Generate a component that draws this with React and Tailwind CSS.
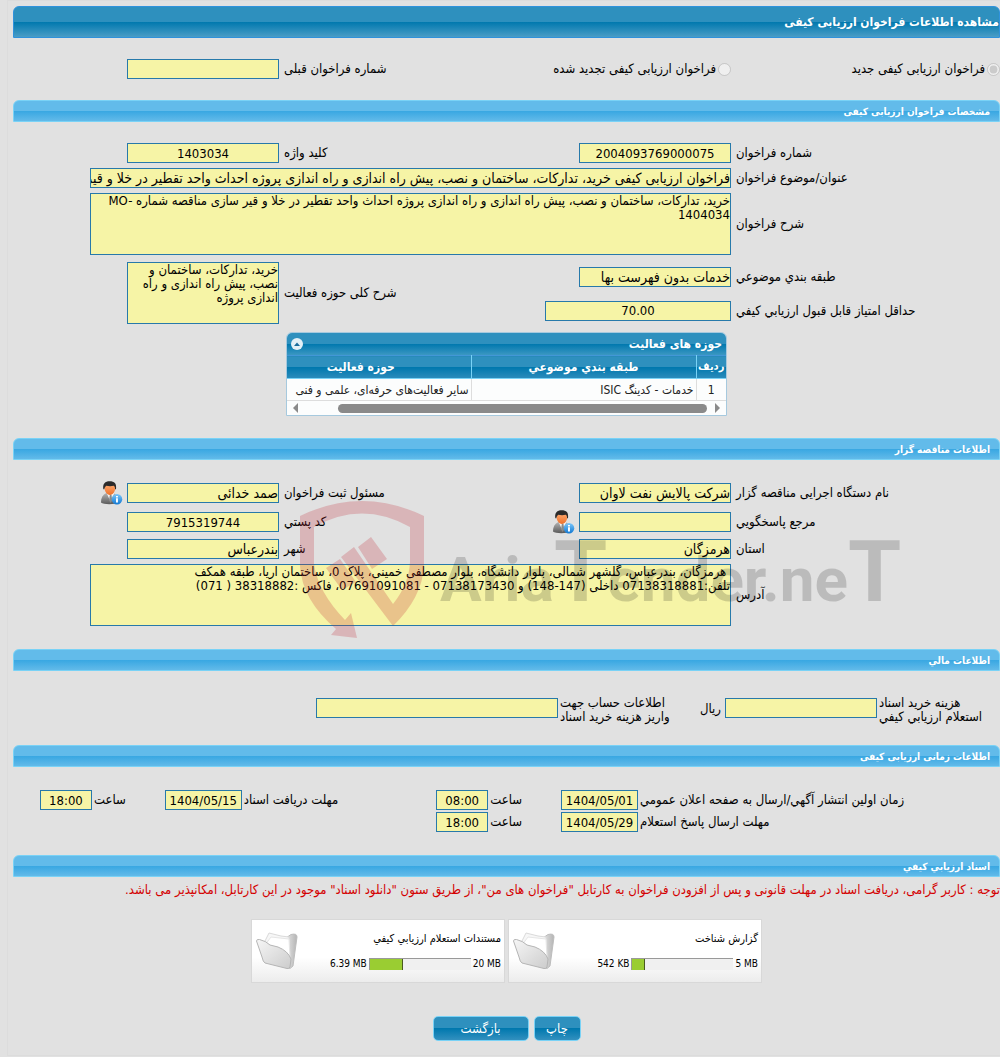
import React, { useId } from 'react';
import clsx from 'clsx';

const COST_ROW_LABEL = 'whitespace-pre-line text-left text-[13px] leading-[14px]';

const VALUES = {
  title:
    'فراخوان ارزیابی کیفی خرید، تدارکات، ساختمان و نصب، پیش راه اندازی و راه اندازی پروژه احداث واحد تقطیر در خلا و قیر سازی مناقصه شماره MO-1404034',
  description:
    'خرید، تدارکات، ساختمان و نصب، پیش راه اندازی و راه اندازی پروژه احداث واحد تقطیر در خلا و قیر سازی مناقصه شماره MO-1404034',
  activity: 'خرید، تدارکات، ساختمان و نصب، پیش راه اندازی و راه اندازی پروژه',
  address:
    ' هرمزگان، بندرعباس، گلشهر شمالی، بلوار دانشگاه، بلوار مصطفی خمینی، پلاک 0، ساختمان آریا، طبقه همکف\nتلفن:07138318881 داخلی (147-148) و 07138173430 - 07691091081، فاکس :38318882 ( 071)',
};

const documents = [
  { title: 'گزارش شناخت', used: '542 KB', total: '5 MB', percent: 12 },
  { title: 'مستندات استعلام ارزيابي كيفي', used: '6.39 MB', total: '20 MB', percent: 33 },
];

const SectionBar = ({ children }) => (
  <h2 className="flex h-[22px] items-center rounded-t-md border border-[#79d2f6] bg-[linear-gradient(to_bottom,#62bbea_0%,#62bbea_50%,#38a7e2_50%,#62bae9_100%)] px-[9px] text-[10px] font-bold text-white">
    {children}
  </h2>
);

const TextBox = ({ id, value = '', center, className }) => (
  <input
    id={id}
    type="text"
    readOnly
    value={value}
    className={clsx(
      'h-5 min-w-0 border border-[#2779aa] bg-[#f6f4a6] text-black outline-none',
      center ? 'text-center text-[13px]' : 'text-sm',
      className
    )}
  />
);

const TextArea = ({ id, value, className }) => (
  <textarea
    id={id}
    readOnly
    value={value}
    className={clsx(
      'block h-[62px] resize-none overflow-hidden border border-[#2779aa] bg-[#f6f4a6] text-[13px] leading-[14px] text-black outline-none',
      className
    )}
  />
);

// label cell followed by its value cell, both are items of the parent grid
const Field = ({ label, value, center, area, width = 'w-[152px]', cell, icon }) => {
  const id = useId();
  return (
    <>
      <label
        htmlFor={id}
        className={clsx('self-center whitespace-nowrap pl-px text-left text-[13px]', cell === 'tall' && 'row-span-2')}
      >
        {label}
      </label>
      <div
        className={clsx(
          'flex min-w-0 items-center gap-1 ps-1',
          cell === 'wide' && 'col-span-3',
          cell === 'tall' && 'row-span-2'
        )}
      >
        {area ? (
          <TextArea id={id} value={value} className={clsx('shrink-0', width)} />
        ) : (
          <TextBox id={id} value={value} center={center} className={clsx('shrink-0', width)} />
        )}
        {icon && (
          <button type="button" aria-label={label} className="shrink-0">
            <PersonIcon />
          </button>
        )}
      </div>
    </>
  );
};

const PersonIcon = () => (
  <svg width="23" height="24" viewBox="0 0 23 25" aria-hidden="true">
    <defs>
      <linearGradient id="suit" x1="0" y1="0" x2="0" y2="1">
        <stop offset="0" stopColor="#b4b4b4" />
        <stop offset="1" stopColor="#5a5a5a" />
      </linearGradient>
      <linearGradient id="face" x1="0" y1="0" x2="0" y2="1">
        <stop offset="0" stopColor="#ffb27a" />
        <stop offset="1" stopColor="#f0712a" />
      </linearGradient>
      <linearGradient id="info" x1="0" y1="0" x2="0" y2="1">
        <stop offset="0" stopColor="#7cc7fb" />
        <stop offset="1" stopColor="#1178d2" />
      </linearGradient>
    </defs>
    <path d="M.5 22.500c0-5 2-8.500 5.500-10h7c4 1 6 5 6 10-3 2-15.500 2.500-18.500 0z" fill="url(#suit)" />
    <path d="M6.500 12.500l4 9 4-9z" fill="#f4f4f4" />
    <path d="M9.800 14h1.600l.9 6-1.700 3-1.600-3z" fill="#8a8a8a" />
    <path d="M4 6c0-3 2-4.500 5.800-4.500S15.500 3 15.500 6.500c0 4.500-2.500 8-5.700 8S4 10.500 4 6z" fill="url(#face)" />
    <path d="M3 8.500C2 3 5 .3 9.500 .3c5 0 7.500 2.200 6.700 8.200h-1c0-2-.4-3-1.400-3.500C11 5.800 8 5.500 6 5 5 6 4.300 7 4 8.500z" fill="#2b2b2b" />
    <circle cx="17.200" cy="19" r="5.500" fill="url(#info)" />
    <path d="M16.200 15.500h2v1.700h-2zM16.200 18h2v4.500h-2z" fill="#fff" />
  </svg>
);

const FolderIcon = () => (
  <svg width="44" height="40" viewBox="0 0 44 40" aria-hidden="true" className="shrink-0">
    <defs>
      <linearGradient id="folder" x1="0" y1="0" x2="1" y2="1">
        <stop offset="0" stopColor="#f6f6f6" />
        <stop offset="1" stopColor="#cccccc" />
      </linearGradient>
      <linearGradient id="folderBack" x1="0" y1="0" x2="1" y2="0">
        <stop offset="0" stopColor="#f2f2f2" />
        <stop offset="1" stopColor="#b4b4b4" />
      </linearGradient>
    </defs>
    <path d="M28 9l8-5.500q6-1.500 6 2.500l-4 29-3 2.500-5-2z" fill="url(#folderBack)" stroke="#bdbdbd" />
    <path d="M9 12l5-10 12 3 8 1 1 20-22-5z" fill="#f7f7f7" stroke="#dadada" />
    <path d="M10 14l6-8 18 2 1 19z" fill="#fff" stroke="#e6e6e6" />
    <path d="M1.500 10q0-2 3-1.500Q11 10 15 14l8 2q10 4 13 12l-1 8q-1 2-3 1.500L10 32q-2-1-3-6z" fill="url(#folder)" stroke="#b5b5b5" />
  </svg>
);

const ActivityTable = () => (
  <div className="w-[441px] overflow-hidden rounded-t-md border border-[#a6c9de] bg-[#fcfdfd]">
    <div className="flex h-[22px] items-center justify-between bg-[linear-gradient(to_bottom,#2e90be_0%,#2e90be_50%,#0078ae_50%,#3b97c2_100%)] px-1 text-xs font-bold text-white">
      <h3>حوزه های فعالیت</h3>
      <button type="button" aria-label="حوزه های فعالیت" className="flex size-3 items-center justify-center rounded-full bg-[#e4f0f7]">
        <svg width="6" height="4" viewBox="0 0 6 4" aria-hidden="true">
          <path d="M0 4l3-3.500L6 4z" fill="#1c6d9c" />
        </svg>
      </button>
    </div>
    <table className="w-full table-fixed border-collapse">
      <colgroup>
        <col className="w-[30px]" />
        <col className="w-[225px]" />
        <col />
      </colgroup>
      <thead>
        <tr className="h-[23px] border-b border-t border-b-[#79d2f6] border-t-[#4297d7] bg-[linear-gradient(to_bottom,#2e90be_0%,#2e90be_50%,#0078ae_50%,#2a8bbb_100%)] text-xs leading-4 text-white">
          <th className="border-l border-[#79d2f6] p-0 text-[11px]">ردیف</th>
          <th className="border-l border-[#79d2f6] p-0">طبقه بندي موضوعي</th>
          <th className="py-0 pl-0 pr-9">حوزه فعالیت</th>
        </tr>
      </thead>
      <tbody>
        <tr className="h-[22px] border-b border-[#dddddd] text-xs text-[#222222]">
          <td className="border-l border-[#dddddd] p-0 text-center">1</td>
          <td className="border-l border-[#dddddd] px-0.5 py-0">خدمات - کدینگ ISIC</td>
          <td className="whitespace-nowrap px-0.5 py-0">سایر فعالیت‌های حرفه‌ای، علمی و فنی</td>
        </tr>
      </tbody>
    </table>
    <div className="flex h-[14px] items-center gap-2 px-1.5" aria-hidden="true">
      <svg width="5" height="10" viewBox="0 0 5 10">
        <path d="M0 0v10l5-5z" fill="#8a8a8a" />
      </svg>
      <div className="flex-1">
        <div className="h-[9px] w-[92%] rounded-full bg-[#8a8a8a]" />
      </div>
      <svg width="5" height="10" viewBox="0 0 5 10">
        <path d="M5 0v10L0 5z" fill="#8a8a8a" />
      </svg>
    </div>
  </div>
);

const Watermark = () => (
  <div dir="ltr" className="pointer-events-none absolute left-[287px] top-[62px] flex items-start gap-[15px]" aria-hidden="true">
    <svg width="125" height="138" viewBox="0 0 125 138">
      <g fill="#c02a35" fillOpacity=".24">
        <path d="M0 16Q62-14 124 16V66Q122 98 93 126L41 57 54 47 93 104Q109 84 110 62V27Q62 0 14 27V64Q18 92 45 120L51 113 57 138 31 135 36 129Q2 100 0 66Z" />
        <path d="M26 68L40 59 56 82 42 90zM58 47L71 37 87 59 72 69z" />
      </g>
    </svg>
    <span className="pt-4 font-['Roboto','Liberation_Sans',sans-serif] text-[62px] font-bold leading-[112px] text-black/17">
      Aria<span className="text-[86px]">T</span>ender.ne<span className="text-[86px]">T</span>
    </span>
  </div>
);

const DocumentCard = ({ doc }) => (
  <div className="flex h-16 w-[254px] items-center justify-between border border-[#d8d8d8] bg-linear-to-b from-white from-60% to-[#ececec] px-[3px]">
    <div className="flex flex-1 flex-col gap-3">
      <span className="text-[11px] leading-[14px]">{doc.title}</span>
      <div className="flex items-center gap-0.5 text-[10px] leading-3">
        <span dir="ltr">{doc.total}</span>
        <div dir="ltr" className="h-3 w-[102px] border-l border-t border-[#999999] bg-[#f0f0f0]">
          <div className="h-full border-r border-[#4a5a20] bg-[#9acd32]" style={{ width: `${doc.percent}%` }} />
        </div>
        <span dir="ltr">{doc.used}</span>
      </div>
    </div>
    <FolderIcon />
  </div>
);

const ActionButton = ({ children, className }) => (
  <button
    type="button"
    className={clsx(
      'h-[25px] rounded-[5px] border border-[#79d2f6] bg-[linear-gradient(to_bottom,#2e90be_0%,#2e90be_50%,#0078ae_50%,#3290bf_100%)] text-[13px] leading-4 text-white',
      className
    )}
  >
    {children}
  </button>
);

const FormGrid = ({ children, className }) => (
  <div className={clsx('grid grid-cols-[265fr_187fr_265fr_270fr] gap-y-[5px]', className)}>{children}</div>
);

const ScheduleField = ({ label, value, short }) => {
  const id = useId();
  return (
    <>
      <label htmlFor={id} className="self-center whitespace-nowrap text-left text-[13px]">
        {label}
      </label>
      <div className="flex ps-0.5">
        <TextBox id={id} value={value} center className={clsx('shrink-0', short ? 'w-[52px]' : 'w-[77px]')} />
      </div>
    </>
  );
};

export default function App() {
  return (
    <main
      dir="rtl"
      className="min-h-screen overflow-hidden bg-[#e1e1e1] pl-[7px] font-['DejaVu_Sans_Condensed','DejaVu_Sans',sans-serif] text-black"
    >
      <div className="border-y border-l border-[#dcdcdc] pb-[14px] pl-[5px] pt-[5px]">
        <h1 className="flex h-8 items-center rounded-t-md border border-[#2f92dc] bg-[linear-gradient(to_bottom,#2e90be_0%,#2e90be_50%,#0078ae_50%,#4a9dc6_100%)] text-xs font-bold text-white">
          مشاهده اطلاعات فراخوان ارزیابی کیفی
        </h1>

        <FormGrid className="py-[21px]">
          <label className="flex items-center gap-0.5 whitespace-nowrap text-[13px]">
            <input type="radio" name="callType" disabled defaultChecked className="size-[13px]" />
            فراخوان ارزیابی کیفی جدید
          </label>
          <label className="flex min-w-0 items-center gap-0.5 whitespace-nowrap ps-1 text-[13px]">
            <input type="radio" name="callType" disabled className="size-[13px]" />
            فراخوان ارزیابی کیفی تجدید شده
          </label>
          <Field label="شماره فراخوان قبلی" />
        </FormGrid>

        <section>
          <SectionBar>مشخصات فراخوان ارزیابی کیفی</SectionBar>
          <FormGrid className="pt-[21px]">
            <Field label="شماره فراخوان" value="2004093769000075" center />
            <Field label="کلید واژه" value="1403034" center />
            <Field label="عنوان/موضوع فراخوان" value={VALUES.title} cell="wide" width="w-[641px]" />
            <Field label="شرح فراخوان" value={VALUES.description} area cell="wide" width="w-[641px]" />
          </FormGrid>
          <FormGrid className="grid-rows-[30px_27px] pt-[7px]">
            <Field label="طبقه بندي موضوعي" value="خدمات بدون فهرست بها" />
            <Field label="شرح کلی حوزه فعالیت" value={VALUES.activity} area cell="tall" />
            <Field label="حداقل امتياز قابل قبول ارزيابي کيفي" value="70.00" center width="w-[186px]" />
          </FormGrid>
          <FormGrid className="pb-[22px] pt-2">
            <div className="col-span-3 col-start-2 ps-2">
              <ActivityTable />
            </div>
          </FormGrid>
        </section>

        <section className="relative">
          <SectionBar>اطلاعات مناقصه گزار</SectionBar>
          <FormGrid className="pb-[23px] pt-[21px]">
            <Field label="نام دستگاه اجرایی مناقصه گزار" value="شرکت پالایش نفت لاوان" />
            <Field label="مسئول ثبت فراخوان" value="صمد خدائی" icon />
            <Field label="مرجع پاسخگويي" icon />
            <Field label="کد پستي" value="7915319744" center />
            <Field label="استان" value="هرمزگان" />
            <Field label="شهر" value="بندرعباس" />
            <Field label="آدرس" value={VALUES.address} area cell="wide" width="w-[641px]" />
          </FormGrid>
          <Watermark />
        </section>

        <section>
          <SectionBar>اطلاعات مالي</SectionBar>
          <div className="flex items-start pb-[21px] pt-[25px]">
            <label htmlFor="docCost" className={clsx('w-[121px]', COST_ROW_LABEL)}>
              {'هزینه خرید اسناد\nاستعلام ارزيابي کيفي'}
            </label>
            <div className="flex items-start gap-1 ps-0.5 pt-0.5">
              <TextBox id="docCost" className="w-[152px]" />
              <span className="pt-px text-[13px] leading-5">ریال</span>
            </div>
            <label htmlFor="docAccount" className={clsx('w-[140px]', COST_ROW_LABEL)}>
              {'اطلاعات حساب جهت\nواریز هزینه خرید اسناد'}
            </label>
            <div className="ps-0.5 pt-0.5">
              <TextBox id="docAccount" className="block w-[242px]" />
            </div>
          </div>
        </section>

        <section>
          <SectionBar>اطلاعات زمانی ارزیابی کیفی</SectionBar>
          <div className="grid grid-cols-[361fr_78fr_71fr_54fr_193fr_79fr_71fr_53fr_27fr] gap-y-0.5 py-[23px]">
            <ScheduleField label="زمان اولین انتشار آگهي/ارسال به صفحه اعلان عمومي" value="1404/05/01" />
            <ScheduleField label="ساعت" value="08:00" short />
            <ScheduleField label="مهلت دریافت اسناد" value="1404/05/15" />
            <ScheduleField label="ساعت" value="18:00" short />
            <span />
            <ScheduleField label="مهلت ارسال پاسخ استعلام" value="1404/05/29" />
            <ScheduleField label="ساعت" value="18:00" short />
          </div>
        </section>

        <section>
          <SectionBar>اسناد ارزيابي كيفي</SectionBar>
          <p className="pt-1 text-[13px] leading-[18px] text-[#d40000]">
            توجه : کاربر گرامی، دریافت اسناد در مهلت قانونی و پس از افزودن فراخوان به کارتابل "فراخوان های من"، از طریق ستون "دانلود اسناد" موجود در این کارتابل، امکانپذیر می باشد.
          </p>
          <div className="flex justify-center gap-[3px] pt-5">
            {documents.map((doc) => (
              <DocumentCard key={doc.title} doc={doc} />
            ))}
          </div>
        </section>

        <div className="flex justify-center gap-[5px] pt-[33px]">
          <ActionButton className="w-[47px]">چاپ</ActionButton>
          <ActionButton className="w-24">بازگشت</ActionButton>
        </div>
      </div>
    </main>
  );
}
